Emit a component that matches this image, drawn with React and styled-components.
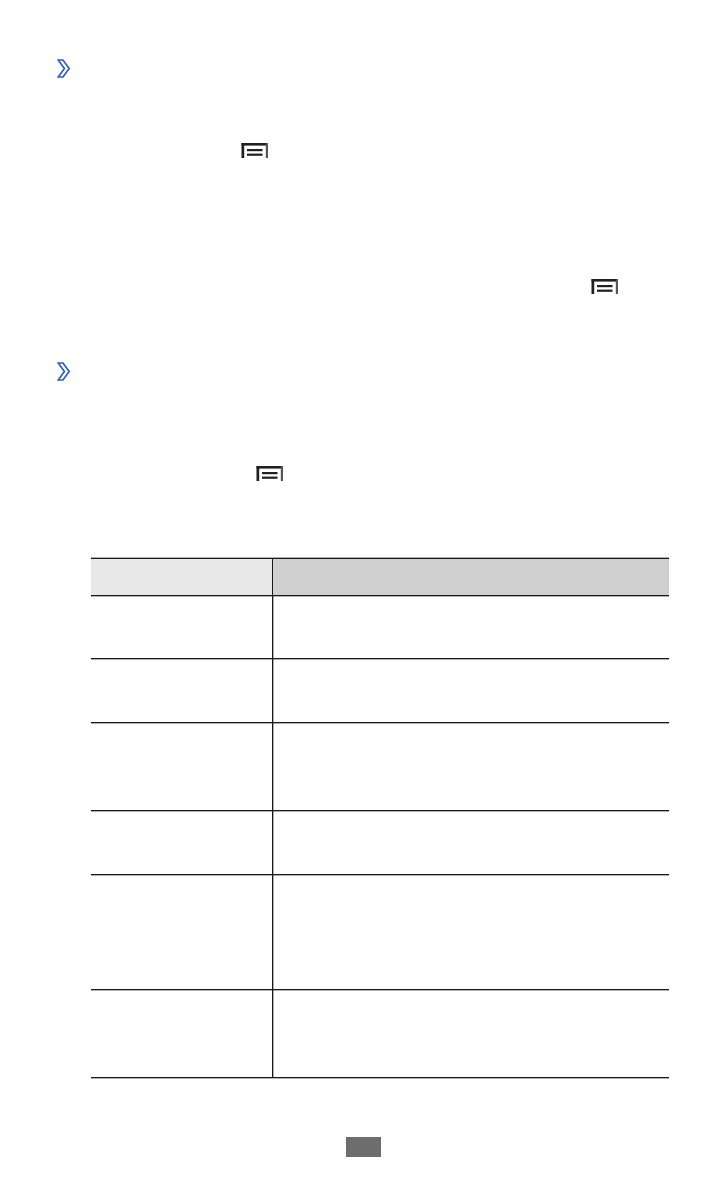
import React from "react";
import styled, { createGlobalStyle } from "styled-components";

const GlobalStyle = createGlobalStyle`
  html, body { margin: 0; padding: 0; background: #ffffff; }
  body { font-family: "Liberation Sans", Arial, sans-serif; color: #231f20; }
`;

const Page = styled.div`
  width: 726px;
  min-height: 1191px;
  box-sizing: border-box;
  padding-top: 59px;
  display: flex;
  flex-direction: column;
`;

const Heading = styled.div`
  display: flex;
  align-items: flex-start;
  height: 19px;
  margin-top: ${(p) => p.$top || 0}px;
  padding-left: 57px;
`;

const Line = styled.div`
  display: flex;
  align-items: flex-start;
  height: 15px;
  margin-top: ${(p) => p.$top || 0}px;
  padding-left: ${(p) => p.$indent || 0}px;
`;

const Table = styled.div`
  margin-top: ${(p) => p.$top || 0}px;
  margin-left: 91px;
  width: 578px;
  border-top: 1px solid #1a1718;
  box-shadow: 0 -1px 0 rgba(35, 31, 32, 0.35);
  display: flex;
  flex-direction: column;
`;

const Row = styled.div`
  display: grid;
  grid-template-columns: 182px 1fr;
  height: ${(p) => p.$h}px;
  box-sizing: border-box;
  border-bottom: 1px solid #1a1718;
  box-shadow: 0 1px 0 rgba(35, 31, 32, 0.35);
`;

const Cell = styled.div`
  background: ${(p) => p.$bg || "transparent"};
  border-right: ${(p) => (p.$first ? "1px solid #1a1718" : "none")};
  box-shadow: ${(p) => (p.$first ? "1px 0 0 rgba(35, 31, 32, 0.35)" : "none")};
`;

const PageNumber = styled.div`
  align-self: center;
  margin-top: ${(p) => p.$top || 0}px;
  margin-left: 1px;
  width: 35px;
  height: 20px;
  background: #6d6d6d;
`;

const Chevron = () => (
  <svg width="14" height="19" viewBox="0 0 14 19">
    <polygon
      points="1.2,1 6,1 12.2,9.5 6,18 1.2,18 7.4,9.5"
      fill="#ffffff"
      stroke="#2b5fc1"
      strokeWidth="1.7"
      strokeLinejoin="miter"
    />
  </svg>
);

const MenuIcon = () => (
  <svg width="28" height="15" viewBox="0 0 28 15">
    <rect x="0.5" y="0" width="26.5" height="2.6" fill="#231f20" />
    <rect x="0.5" y="0" width="2.7" height="15" fill="#231f20" />
    <rect x="24.8" y="0" width="2.2" height="15" fill="#555555" />
    <rect x="6" y="6" width="15.5" height="2.2" fill="#231f20" />
    <rect x="6" y="10.6" width="15.5" height="2.2" fill="#231f20" />
  </svg>
);

const rows = [63, 64, 88, 64, 115, 88];

export default function App() {
  return (
    <>
      <GlobalStyle />
      <Page>
        <Heading>
          <Chevron />
        </Heading>
        <Line $top={65} $indent={241}>
          <MenuIcon />
        </Line>
        <Line $top={121} $indent={591}>
          <MenuIcon />
        </Line>
        <Heading $top={68}>
          <Chevron />
        </Heading>
        <Line $top={85} $indent={256}>
          <MenuIcon />
        </Line>
        <Table $top={77}>
          <Row $h={37}>
            <Cell $first $bg="#e8e8e8" />
            <Cell $bg="#cfcfcf" />
          </Row>
          {rows.map((h, i) => (
            <Row key={i} $h={h}>
              <Cell $first />
              <Cell />
            </Row>
          ))}
        </Table>
        <PageNumber $top={59} />
      </Page>
    </>
  );
}
